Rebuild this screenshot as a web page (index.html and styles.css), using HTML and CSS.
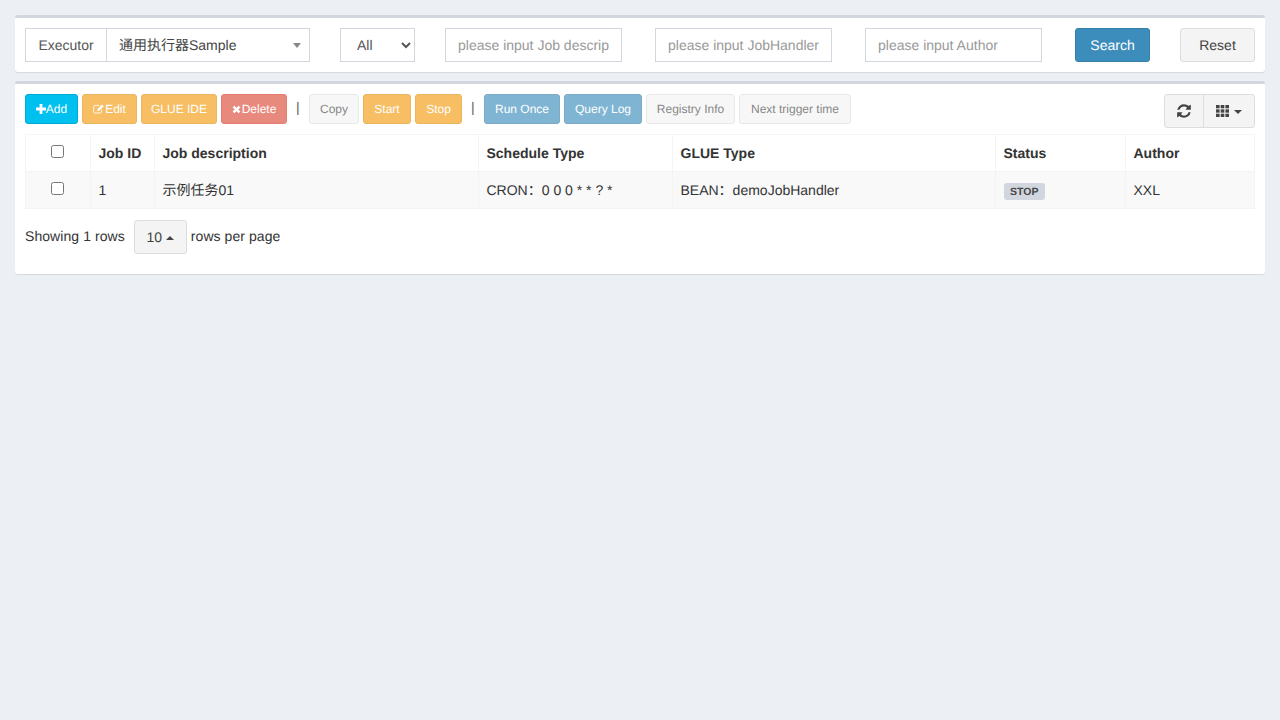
FILE: index.html
```html
<!DOCTYPE html>
<html lang="en">

<head>
  <meta charset="UTF-8">
  <title>Job manage</title>
  <link rel="stylesheet" href="styles.css">
</head>

<body>

  <div class="box search-box">
    <div class="input-group">
      <span class="addon">Executor</span>
      <div class="select2">
        <span>通用执行器Sample</span>
        <i class="select2-arrow"></i>
      </div>
    </div>
    <select class="form-control status-select">
      <option>All</option>
    </select>
    <input class="form-control job-desc" type="text" placeholder="please input Job description">
    <input class="form-control job-handler" type="text" placeholder="please input JobHandler">
    <input class="form-control job-author" type="text" placeholder="please input Author">
    <button class="btn btn-primary search-btn">Search</button>
    <button class="btn btn-default reset-btn">Reset</button>
  </div>

  <div class="box table-box">
    <div class="toolbar">
      <div class="actions">
        <button class="btn btn-sm btn-info btn-add">
          <svg class="icon" viewBox="1 1 10 10"><path d="M4.6 1h2.8v3.6H11v2.8H7.4V11H4.6V7.4H1V4.6h3.6z" /></svg>Add
        </button>
        <button class="btn btn-sm btn-warning disabled btn-edit">
          <svg class="icon" viewBox="0 0 14 12"><path d="M10 7v2.2c0 .9-.6 1.5-1.5 1.5H2.3c-.9 0-1.5-.6-1.5-1.5V3.3c0-.9.6-1.5 1.5-1.5h5.2" fill="none" stroke="currentColor" stroke-width="1" /><path d="M5 6.2 10.6.8l1.9 1.9L7 8.2H5z" /></svg>Edit
        </button>
        <button class="btn btn-sm btn-warning disabled btn-glue">GLUE IDE</button>
        <button class="btn btn-sm btn-danger disabled btn-delete">
          <svg class="icon" viewBox="0 0 10 12"><path d="M2.6 2.4 5 4.7l2.4-2.3 1.9 1.9L7 6.6l2.3 2.3-1.9 1.9L5 8.5l-2.4 2.3L.7 8.9 3 6.6.7 4.3z" /></svg>Delete
        </button>
        <span class="divider">|</span>
        <button class="btn btn-sm btn-default disabled btn-copy">Copy</button>
        <button class="btn btn-sm btn-warning disabled btn-start">Start</button>
        <button class="btn btn-sm btn-warning disabled btn-stop">Stop</button>
        <span class="divider">|</span>
        <button class="btn btn-sm btn-primary disabled btn-run">Run Once</button>
        <button class="btn btn-sm btn-primary disabled btn-log">Query Log</button>
        <button class="btn btn-sm btn-default disabled btn-registry">Registry Info</button>
        <button class="btn btn-sm btn-default disabled btn-next">Next trigger time</button>
      </div>
      <div class="btn-group">
        <button class="btn btn-default refresh-btn">
          <svg class="refresh-icon" viewBox="0 0 1536 1792"><path d="M1511 1056q0 5-1 7-64 268-268 434.5t-478 166.5q-146 0-282.5-55t-243.5-157l-129 129q-19 19-45 19t-45-19-19-45v-448q0-26 19-45t45-19h448q26 0 45 19t19 45-19 45l-137 137q71 66 161 102t187 36q134 0 250-65t186-179q11-17 53-117 8-23 30-23h192q13 0 22.5 9.5t9.5 22.5zm25-800v448q0 26-19 45t-45 19h-448q-26 0-45-19t-19-45 19-45l138-138q-148-137-349-137-134 0-250 65t-186 179q-11 17-53 117-8 23-30 23h-199q-13 0-22.5-9.5t-9.5-22.5v-7q65-268 270-434.5t480-166.5q146 0 284 55.5t245 156.5l130-129q19-19 45-19t45 19 19 45z" /></svg>
        </button>
        <button class="btn btn-default columns-btn">
          <svg class="th-icon" viewBox="0 0 13 12">
            <rect x="0" y="0" width="3.6" height="3.3" />
            <rect x="4.7" y="0" width="3.6" height="3.3" />
            <rect x="9.4" y="0" width="3.6" height="3.3" />
            <rect x="0" y="4.35" width="3.6" height="3.3" />
            <rect x="4.7" y="4.35" width="3.6" height="3.3" />
            <rect x="9.4" y="4.35" width="3.6" height="3.3" />
            <rect x="0" y="8.7" width="3.6" height="3.3" />
            <rect x="4.7" y="8.7" width="3.6" height="3.3" />
            <rect x="9.4" y="8.7" width="3.6" height="3.3" />
          </svg>
          <i class="caret"></i>
        </button>
      </div>
    </div>

    <table class="job-table">
      <thead>
        <tr>
          <th class="col-check"><input type="checkbox"></th>
          <th class="col-id">Job ID</th>
          <th class="col-desc">Job description</th>
          <th class="col-schedule">Schedule Type</th>
          <th class="col-glue">GLUE Type</th>
          <th class="col-status">Status</th>
          <th>Author</th>
        </tr>
      </thead>
      <tbody>
        <tr>
          <td class="col-check"><input type="checkbox"></td>
          <td>1</td>
          <td>示例任务01</td>
          <td>CRON：0 0 0 * * ? *</td>
          <td>BEAN：demoJobHandler</td>
          <td><span class="label">STOP</span></td>
          <td>XXL</td>
        </tr>
      </tbody>
    </table>

    <div class="pagination">
      <span>Showing 1 rows</span>
      <button class="btn btn-default page-size">10 <i class="caret caret-up"></i></button>
      <span>rows per page</span>
    </div>
  </div>

</body>

</html>
```

FILE: styles.css
```css
* {
  box-sizing: border-box;
}

body {
  margin: 0;
  padding: 15px;
  min-height: 720px;
  background-color: #ecf0f5;
  color: #333;
  font-family: "Liberation Sans", "Noto Sans CJK SC", sans-serif;
  font-size: 14px;
  line-height: 20px;
  text-rendering: geometricPrecision;
}

.box {
  background: #fff;
  border-top: 3px solid #d2d6de;
  border-radius: 3px;
  box-shadow: 0 1px 1px rgba(0, 0, 0, 0.1);
}

.search-box {
  display: flex;
  height: 57px;
  padding: 10px;
  margin-bottom: 9px;
}

.table-box {
  height: 193px;
  padding: 10px;
}

/* search row */
.input-group {
  display: flex;
  width: 285px;
  height: 34px;
}

.addon {
  width: 82px;
  border: 1px solid #d2d6de;
  color: #555;
  text-align: center;
  line-height: 32px;
}

.select2 {
  position: relative;
  flex: 1;
  margin-left: -1px;
  padding-left: 12px;
  border: 1px solid #d2d6de;
  color: #444;
  line-height: 32px;
}

.select2-arrow {
  position: absolute;
  top: 14px;
  right: 8px;
  border-top: 5px solid #888;
  border-left: 4px solid transparent;
  border-right: 4px solid transparent;
}

.form-control {
  height: 34px;
  padding: 6px 12px;
  border: 1px solid #d2d6de;
  border-radius: 0;
  background-color: #fff;
  color: #555;
  font-family: inherit;
  font-size: 14px;
  text-rendering: geometricPrecision;
  outline: 0;
}

.form-control::placeholder {
  color: #999;
  opacity: 1;
}

.status-select {
  width: 75px;
  margin-left: 30px;
}

.job-desc,
.job-handler,
.job-author {
  width: 177px;
}

.job-desc {
  margin-left: 30px;
}

.job-handler,
.job-author {
  margin-left: 33px;
}

.search-btn {
  width: 75px;
  margin-left: 33px;
}

.reset-btn {
  width: 75px;
  margin-left: 30px;
}

/* buttons */
.btn {
  height: 34px;
  padding: 6px 12px;
  border: 1px solid transparent;
  border-radius: 3px;
  font-family: inherit;
  font-size: 14px;
  line-height: 20px;
  white-space: nowrap;
  text-rendering: geometricPrecision;
}

.btn-sm {
  height: 30px;
  padding: 5px 10px;
  font-size: 12px;
  line-height: 18px;
  color: #fff;
}

.disabled {
  opacity: 0.65;
}

.btn-default {
  background-color: #f4f4f4;
  border-color: #ddd;
  color: #444;
}

.btn-primary {
  background-color: #3c8dbc;
  border-color: #367fa9;
  color: #fff;
}

.btn-info {
  background-color: #00c0ef;
  border-color: #00acd6;
}

.btn-warning {
  background-color: #f39c12;
  border-color: #e08e0b;
}

.btn-danger {
  background-color: #dd4b39;
  border-color: #d73925;
}

.icon {
  width: 10px;
  height: 10px;
  vertical-align: -1px;
  fill: currentColor;
}

.btn-edit .icon {
  width: 12px;
  height: 12px;
  vertical-align: -2px;
}

.btn-delete .icon {
  width: 9px;
  height: 12px;
  margin-right: 1px;
  vertical-align: -2px;
}

/* toolbar */
.toolbar {
  display: flex;
  justify-content: space-between;
  height: 40px;
}

.actions {
  display: flex;
  height: 30px;
  gap: 4px;
}

.btn-add { width: 53px; padding: 0; }
.btn-edit { width: 55px; padding: 0; }
.btn-glue { width: 76px; padding: 0; }
.btn-delete { width: 66px; padding: 0; }
.btn-copy { width: 50px; padding: 0; }
.btn-start { width: 48px; padding: 0; }
.btn-stop { width: 47px; padding: 0; }
.btn-run { width: 76px; padding: 0; }
.btn-log { width: 78px; padding: 0; }
.btn-registry { width: 89px; padding: 0; }
.btn-next { width: 112px; padding: 0; }

.divider {
  width: 14px;
  padding-left: 5px;
  color: #333;
  font-size: 14px;
  line-height: 26px;
  opacity: 0.8;
}

.btn-group {
  display: flex;
}

.refresh-btn {
  width: 40px;
  padding: 0;
  border-radius: 3px 0 0 3px;
}

.columns-btn {
  width: 52px;
  margin-left: -1px;
  padding: 0;
  border-radius: 0 3px 3px 0;
}

.refresh-icon {
  width: 14px;
  height: 16px;
  vertical-align: -3px;
  fill: #444;
}

.th-icon {
  width: 13px;
  height: 12px;
  vertical-align: -1px;
  fill: #444;
}

.caret {
  display: inline-block;
  margin-left: 1px;
  vertical-align: middle;
  border-top: 4px solid #444;
  border-left: 4px solid transparent;
  border-right: 4px solid transparent;
}

.caret-up {
  margin-left: 0;
  border-top: 0;
  border-bottom: 4px solid #444;
}

/* table */
.job-table {
  width: 1230px;
  table-layout: fixed;
  border-collapse: collapse;
  border: 1px solid #f4f4f4;
}

.job-table th,
.job-table td {
  padding: 8px 8px 8px 7.5px;
  border: 1px solid #f4f4f4;
  text-align: left;
  line-height: 20px;
}

.job-table th {
  height: 37px;
}

.job-table td {
  height: 37px;
  background-color: #f9f9f9;
}

.job-table .col-check {
  width: 65px;
  padding: 8px 9px 8px 7px;
  text-align: center;
}

.job-table input {
  margin: 0;
  vertical-align: 0;
}

.col-id { width: 64px; }
.col-desc { width: 324px; }
.col-schedule { width: 194px; }
.col-glue { width: 323px; }
.col-status { width: 130px; }

.label {
  display: inline-block;
  padding: 4px 6.5px 2px;
  border-radius: 3px;
  background-color: #d2d6de;
  color: #444;
  font-size: 10.5px;
  font-weight: 700;
  line-height: 11px;
  vertical-align: middle;
}

/* pagination */
.pagination {
  display: flex;
  align-items: flex-start;
  gap: 9px;
  margin-top: 11px;
}

.pagination span {
  line-height: 32px;
  letter-spacing: 0.07px;
}

.page-size {
  width: 53px;
  padding: 0;
  margin-right: -5px;
}
```
